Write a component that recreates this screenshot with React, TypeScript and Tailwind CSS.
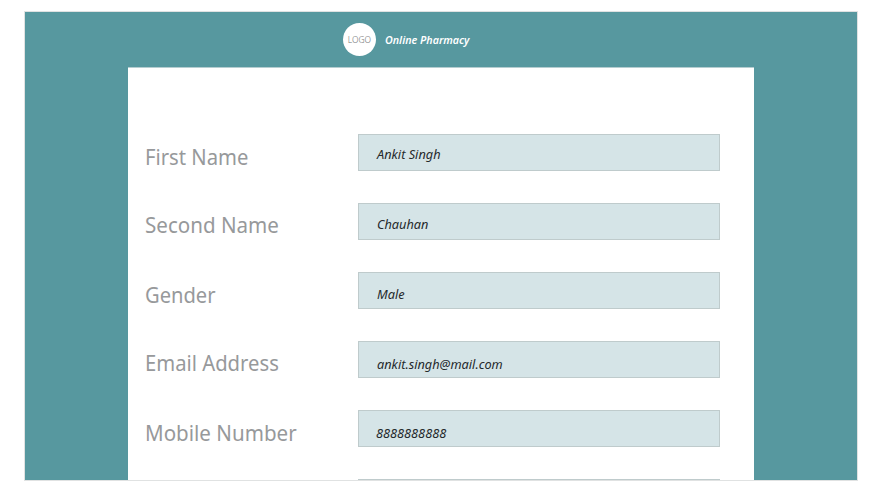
const rows = [
  { label: "First Name", value: "Ankit Singh", labelClass: "mt-[7px] scale-x-[0.92]", valueClass: "pt-[9px] pl-[18px]" },
  { label: "Second Name", value: "Chauhan", labelClass: "mt-[6px] scale-x-[0.935]", valueClass: "pt-2.5 pl-[18px]" },
  { label: "Gender", value: "Male", labelClass: "mt-[7px] scale-x-[0.915]", valueClass: "pt-[11px] pl-[18px]" },
  { label: "Email Address", value: "ankit.singh@mail.com", labelClass: "mt-[6px] scale-x-[0.92]", valueClass: "pt-3 pl-[18px]" },
  { label: "Mobile Number", value: "8888888888", labelClass: "mt-[7px] scale-x-[0.935]", valueClass: "pt-3 pl-[17px]" },
  { label: "", value: "", labelClass: "", valueClass: "" },
];

export default function App() {
  return (
    <div className="h-[495px] w-[880px] overflow-hidden bg-white pt-[11px] pl-6 font-['Noto_Sans','Open_Sans',sans-serif]">
      <div className="flex h-[470px] w-[834px] flex-col overflow-hidden border border-[#e0e2e2] bg-[#57989f]">
        <header className="flex h-[55px] shrink-0 items-center pl-[318px]">
          <div className="flex size-[33px] items-center justify-center rounded-full bg-white pt-px text-[9px] font-light text-[#6f7274]">
            <span className="scale-x-[0.94]">LOGO</span>
          </div>
          <h1 className="ml-[9px] origin-left scale-x-[0.97] pt-px text-[11px] font-semibold text-white italic">
            Online Pharmacy
          </h1>
        </header>
        <main className="ml-[103px] w-[626px] shrink-0 border-t border-[#b5cdd0] bg-white pt-[66px] pl-[17px]">
          {rows.map((row, i) => (
            <div key={i} className="flex h-[69px] items-start">
              <div
                className={`w-[213px] origin-left text-[22px] leading-[30px] whitespace-nowrap text-[#97999b] ${row.labelClass}`}
              >
                {row.label}
              </div>
              <div
                className={`h-[37px] w-[362px] border border-[#bfcbcc] bg-[#d5e4e7] text-[13px] leading-5 text-[#25292c] italic ${row.valueClass}`}
              >
                <span className="inline-block origin-left scale-x-[0.98]">{row.value}</span>
              </div>
            </div>
          ))}
        </main>
      </div>
    </div>
  );
}
